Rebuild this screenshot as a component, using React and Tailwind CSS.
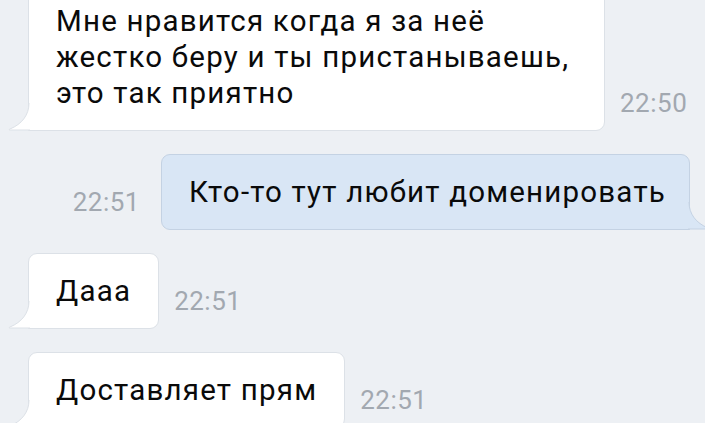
import React from 'react';

const font = { fontFamily: 'Roboto, "Noto Sans", sans-serif' };

function TailLeft() {
  return (
    <svg className="absolute bottom-[-1px] left-[-21px]" width="22" height="28" viewBox="0 0 22 28">
      <path d="M22 0 L21 0 C21 12 14 21 2 26 C0.5 26.6 1 27 2.5 27 L22 27 Z" fill="#ffffff" />
      <path d="M21 0 C21 12 14 21 2 26 C0.5 26.6 1 27 2.5 27 L22 27" fill="none" stroke="#dce1e7" strokeWidth="1" />
    </svg>
  );
}

function TailRight() {
  return (
    <svg className="absolute bottom-[-1px] right-[-21px]" width="22" height="28" viewBox="0 0 22 28">
      <path d="M0 0 L1 0 C1 12 8 21 20 26 C21.5 26.6 21 27 19.5 27 L0 27 Z" fill="#d9e6f5" />
      <path d="M1 0 C1 12 8 21 20 26 C21.5 26.6 21 27 19.5 27 L0 27" fill="none" stroke="#c4d2e3" strokeWidth="1" />
    </svg>
  );
}

function Time({ children }) {
  return <div className="mb-[13px] text-[26px] leading-[30px] tracking-[0.5px] text-[#a2a8b0]">{children}</div>;
}

function Incoming({ lines, time, width }) {
  return (
    <div className="flex items-end gap-[15px] pl-[28px]">
      <div
        className={`relative rounded-[9px] rounded-bl-none border border-[#dce1e7] bg-white px-[27px] py-[19px] text-[29.5px] leading-[36px] tracking-[1.2px] text-[#0a0a0a] ${width || ''}`}
      >
        {lines.map((l, i) => (
          <div key={i} className="whitespace-nowrap">{l}</div>
        ))}
        <TailLeft />
      </div>
      <Time>{time}</Time>
    </div>
  );
}

export default function App() {
  return (
    <div className="h-[423px] w-[705px] overflow-hidden bg-[#edf0f4]" style={font}>
      <div className="mt-[-17px] flex flex-col gap-[23px]">
        <Incoming
          width="w-[577px]"
          lines={['Мне нравится когда я за неё', 'жестко беру и ты пристаныва­ешь,'.replace('\u00ad', ''), 'это так приятно']}
          time="22:50"
        />
        <div className="flex items-end justify-end gap-[21px] pr-[15px]">
          <Time>22:51</Time>
          <div className="relative rounded-[9px] rounded-br-none border border-[#c4d2e3] bg-[#d9e6f5] py-[19px] pl-[27px] pr-[23px] text-[29.5px] leading-[36px] tracking-[1.2px] text-[#0a0a0a] whitespace-nowrap">
            Кто-то тут любит доменировать
            <TailRight />
          </div>
        </div>
        <Incoming lines={['Дааа']} time="22:51" />
        <Incoming lines={['Доставляет прям']} time="22:51" />
      </div>
    </div>
  );
}
